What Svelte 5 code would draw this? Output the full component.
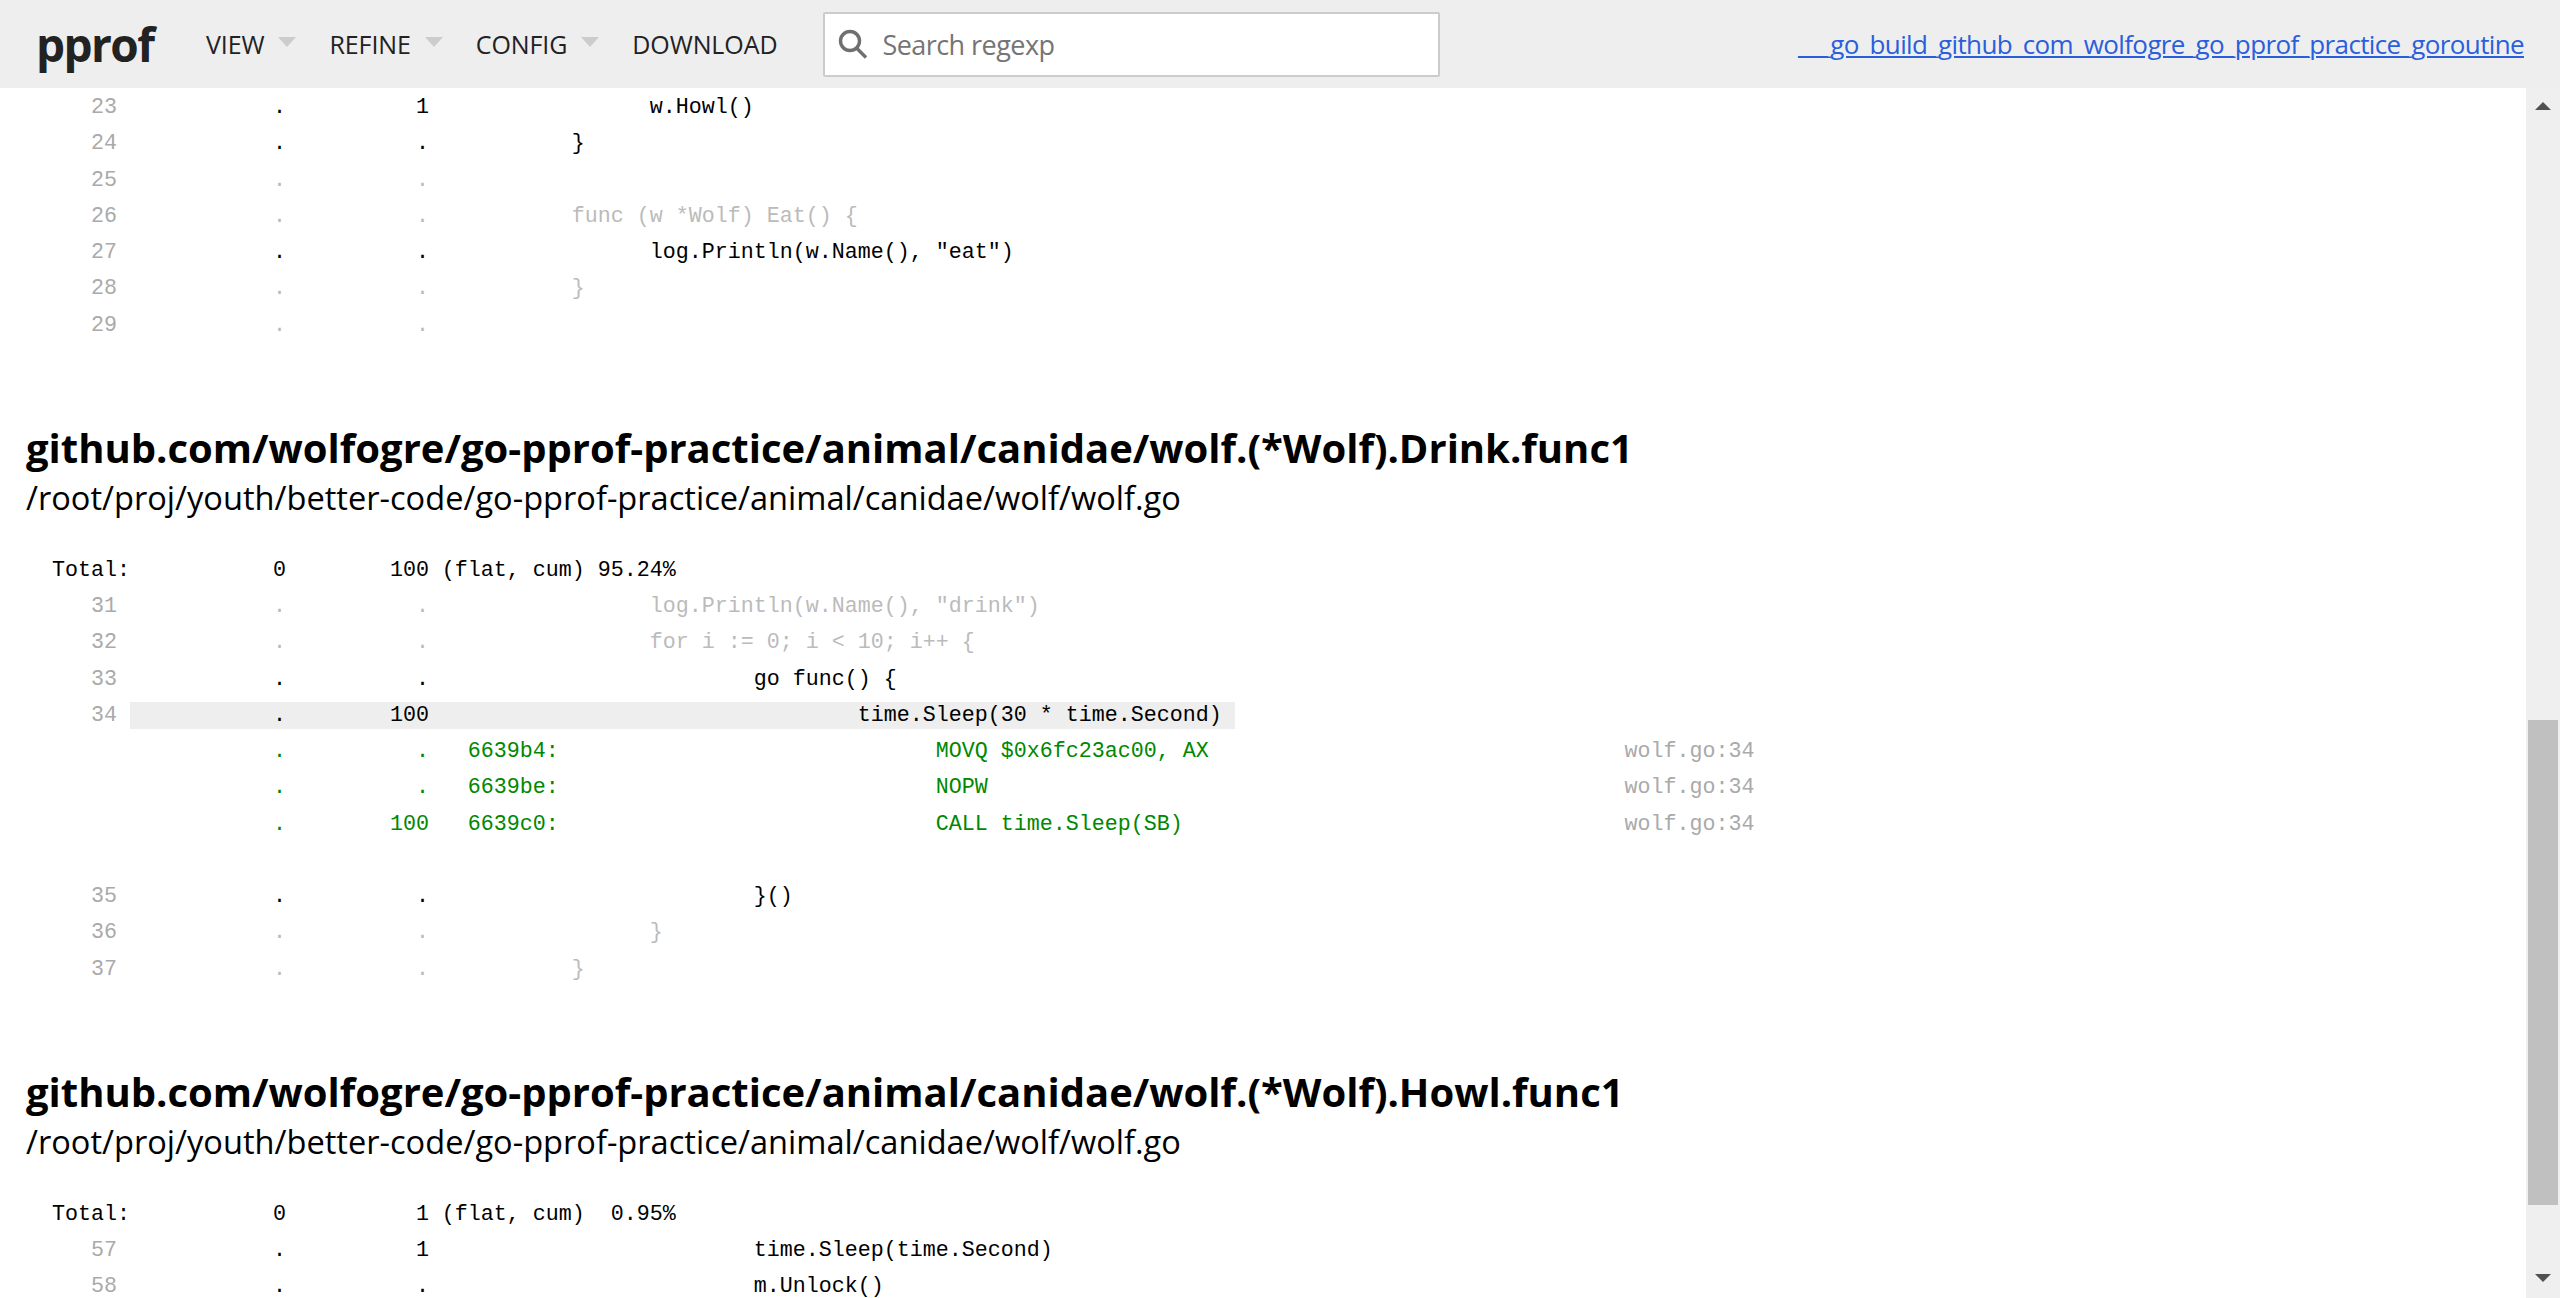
<script lang="ts">
  // column layout of pprof's weblist output, in monospace characters
  const CODE_COL = 31;
  const ASM_ADDR_COL = 34;
  const ASM_INST_COL = 70;
  const ASM_LOC_COL = 123;

  const pad = (s: string, n: number) => s.padStart(n, ' ');
  const at = (s: string, from: number, col: number) => ' '.repeat(Math.max(col - from, 0)) + s;

  const lineNo = (n: number) => pad(String(n), 7) + ' ';
  const nums = (flat: string, cum: string) => pad(flat, 12) + pad(cum, 11);
  const code = (indent: number, text: string) => ' '.repeat(indent - CODE_COL) + text;

  function asm(flat: string, cum: string, addr: string, inst: string) {
    const s = ' '.repeat(8) + nums(flat, cum) + at(addr, CODE_COL, ASM_ADDR_COL);
    return s + at(inst, ASM_ADDR_COL + addr.length, ASM_INST_COL);
  }

  const first = [
    { n: 23, flat: '.', cum: '1', indent: 48, text: 'w.Howl()', live: true },
    { n: 24, flat: '.', cum: '.', indent: 42, text: '}', live: true },
    { n: 25, flat: '.', cum: '.', indent: 42, text: '', live: false },
    { n: 26, flat: '.', cum: '.', indent: 42, text: 'func (w *Wolf) Eat() {', live: false },
    { n: 27, flat: '.', cum: '.', indent: 48, text: 'log.Println(w.Name(), "eat")', live: true },
    { n: 28, flat: '.', cum: '.', indent: 42, text: '}', live: false },
    { n: 29, flat: '.', cum: '.', indent: 42, text: '', live: false }
  ];

  const drinkAsm = [
    { flat: '.', cum: '.', addr: '6639b4:', inst: 'MOVQ $0x6fc23ac00, AX' },
    { flat: '.', cum: '.', addr: '6639be:', inst: 'NOPW' },
    { flat: '.', cum: '100', addr: '6639c0:', inst: 'CALL time.Sleep(SB)' }
  ];

  const sections = [
    {
      title: 'github.com/wolfogre/go-pprof-practice/animal/canidae/wolf.(*Wolf).Drink.func1',
      total: '  Total:           0        100 (flat, cum) 95.24%',
      rows: [
        { n: 31, flat: '.', cum: '.', indent: 48, text: 'log.Println(w.Name(), "drink")', live: false },
        { n: 32, flat: '.', cum: '.', indent: 48, text: 'for i := 0; i < 10; i++ {', live: false },
        { n: 33, flat: '.', cum: '.', indent: 56, text: 'go func() {', live: true },
        { n: 34, flat: '.', cum: '100', indent: 64, text: 'time.Sleep(30 * time.Second) ', live: true, hot: true, asm: drinkAsm },
        { n: 35, flat: '.', cum: '.', indent: 56, text: '}()', live: true },
        { n: 36, flat: '.', cum: '.', indent: 48, text: '}', live: false },
        { n: 37, flat: '.', cum: '.', indent: 42, text: '}', live: false }
      ]
    },
    {
      title: 'github.com/wolfogre/go-pprof-practice/animal/canidae/wolf.(*Wolf).Howl.func1',
      total: '  Total:           0          1 (flat, cum)  0.95%',
      rows: [
        { n: 57, flat: '.', cum: '1', indent: 56, text: 'time.Sleep(time.Second)', live: true },
        { n: 58, flat: '.', cum: '.', indent: 56, text: 'm.Unlock()', live: true }
      ]
    }
  ];
</script>

<div class="page">
  <header class="header">
    <div class="logo">pprof</div>
    <nav class="menu">
      <span class="menu-item">VIEW<i class="caret"></i></span>
      <span class="menu-item">REFINE<i class="caret"></i></span>
      <span class="menu-item">CONFIG<i class="caret"></i></span>
      <span class="menu-item">DOWNLOAD</span>
    </nav>
    <div class="search">
      <svg class="search-icon" viewBox="0 0 30 30" width="30" height="30" aria-hidden="true">
        <circle cx="12" cy="12" r="9.5" fill="none" stroke="#6f6f6f" stroke-width="3.4" />
        <path d="M18.5 19 L28 28.5" fill="none" stroke="#6f6f6f" stroke-width="3.4" />
      </svg>
      <span class="placeholder">Search regexp</span>
    </div>
    <a class="binary" href="#top">___go_build_github_com_wolfogre_go_pprof_practice_goroutine</a>
  </header>

  <div class="body">
    <main class="content">
      <div class="listing">
        {#each first as r}
          <div class="row">
            <span class="line">{lineNo(r.n)}</span><span class:live={r.live} class:nop={!r.live}>{nums(r.flat, r.cum)}{code(r.indent, r.text)}</span>
          </div>
        {/each}
      </div>

      {#each sections as sec}
        <h2 class="title">{sec.title}</h2>
        <p class="path">/root/proj/youth/better-code/go-pprof-practice/animal/canidae/wolf/wolf.go</p>
        <div class="listing">
          <div class="row">{sec.total}</div>
          {#each sec.rows as r}
            <div class="row">
              <span class="line">{lineNo(r.n)}</span><span class:live={r.live} class:nop={!r.live} class:hot={r.hot}>{nums(r.flat, r.cum)}{code(r.indent, r.text)}</span>
            </div>
            {#if r.asm}
              {#each r.asm as a}
                {@const head = asm(a.flat, a.cum, a.addr, a.inst)}
                <div class="row asm">{head}<span class="loc">{at('wolf.go:34', head.length, ASM_LOC_COL)}</span></div>
              {/each}
              <div class="row">&nbsp;</div>
            {/if}
          {/each}
        </div>
      {/each}
    </main>

    <aside class="scrollbar">
      <i class="arrow up"></i>
      <div class="thumb"></div>
      <i class="arrow down"></i>
    </aside>
  </div>
</div>

<style>
  :global(body) {
    margin: 0;
    background: #fff;
  }

  .page {
    height: 100vh;
    display: flex;
    flex-direction: column;
    overflow: hidden;
    font-family: "Open Sans", "Noto Sans", sans-serif;
  }

  .header {
    flex: 0 0 88px;
    display: flex;
    align-items: center;
    padding: 0 36px 0 36px;
    background: #eee;
    color: #222;
  }

  .logo {
    width: 170px;
    font-size: 46px;
    font-weight: 700;
    letter-spacing: -1.6px;
    color: #222;
  }

  .menu {
    display: flex;
    align-items: center;
    font-size: 25px;
  }

  .menu-item {
    display: flex;
    align-items: center;
    letter-spacing: -0.1px;
    margin-right: 33px;
  }

  .caret {
    width: 0;
    height: 0;
    margin-left: 14px;
    margin-top: -4px;
    border-left: 9px solid transparent;
    border-right: 9px solid transparent;
    border-top: 10px solid #ccc;
  }

  .search {
    box-sizing: border-box;
    width: 617px;
    height: 65px;
    margin-left: 13px;
    display: flex;
    align-items: center;
    padding-left: 13px;
    background: #fff;
    border: 2px solid #ccc;
    border-radius: 2px;
  }

  .search-icon {
    flex: none;
  }

  .placeholder {
    margin-left: 14px;
    font-size: 27px;
    letter-spacing: -0.55px;
    color: #757575;
  }

  .binary {
    margin-left: auto;
    font-size: 26px;
    letter-spacing: -0.63px;
    color: #2a5fdc;
  }

  .body {
    flex: 1;
    min-height: 0;
    display: flex;
  }

  .content {
    flex: 1;
    min-width: 0;
    overflow: hidden;
    padding: 2px 0 0 26px;
  }

  .listing {
    font-family: "Liberation Mono", monospace;
    font-size: 21.67px;
    line-height: 36.25px;
    color: #000;
  }

  .row {
    white-space: pre;
    height: 36.25px;
  }

  .line {
    color: #aaa;
  }

  .nop {
    color: #bbb;
  }

  .live {
    color: #000;
  }

  .hot {
    background: #eee;
    padding: 1px 0;
  }

  .asm {
    color: #080;
  }

  .loc {
    color: #aaa;
  }

  .title {
    margin: 77px 0 0;
    font-size: 40px;
    line-height: 53px;
    font-weight: 700;
    color: #000;
  }

  .path {
    margin: 0 0 31px;
    font-size: 32.6px;
    line-height: 48px;
    color: #000;
  }

  .scrollbar {
    flex: 0 0 34px;
    box-sizing: border-box;
    display: flex;
    flex-direction: column;
    align-items: center;
    background: #efefef;
    padding-top: 14px;
  }

  .thumb {
    width: 30px;
    height: 485px;
    margin-top: 610px;
    background: #c0c0c0;
  }

  .arrow {
    width: 0;
    height: 0;
    border-left: 8px solid transparent;
    border-right: 8px solid transparent;
  }

  .up {
    border-bottom: 8px solid #505050;
  }

  .down {
    margin-top: 69px;
    border-top: 8px solid #505050;
  }
</style>
